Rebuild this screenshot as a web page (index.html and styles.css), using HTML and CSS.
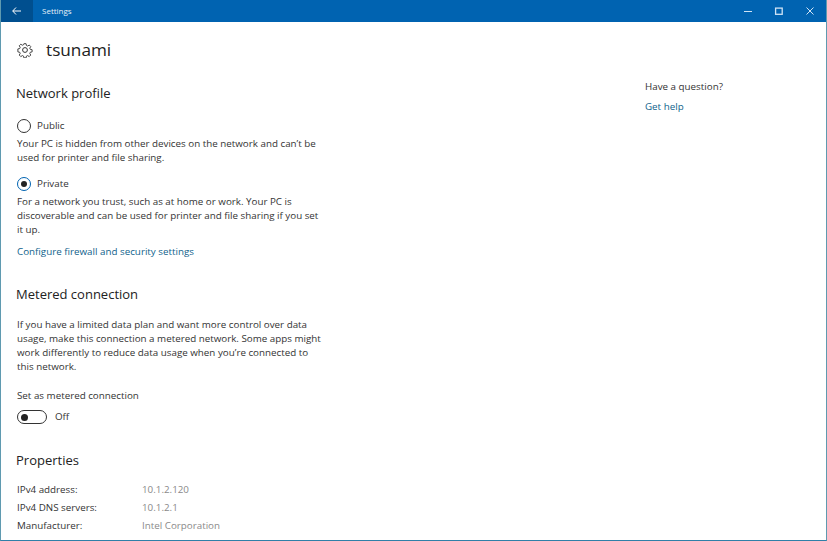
FILE: index.html
```html
<!DOCTYPE html>
<html lang="en">
<head>
<meta charset="utf-8">
<title>Settings</title>
<link rel="stylesheet" href="styles.css">
</head>
<body>
<div class="window">
  <header class="titlebar">
    <button class="back" aria-label="Back">
      <svg width="9" height="8" viewBox="0 0 9 8"><path d="M4 .5 .7 4 4 7.5M.8 4H9" fill="none" stroke="#fff" stroke-width="1"/></svg>
    </button>
    <span class="app-title">Settings</span>
    <div class="controls">
      <svg class="ctl" width="31" height="22" viewBox="0 0 31 22"><path d="M11 11.5h8" stroke="#cfe3f5" fill="none"/></svg>
      <svg class="ctl" width="31" height="22" viewBox="0 0 31 22"><rect x="11.6" y="8.1" width="6.6" height="6.2" stroke="#cfe3f5" stroke-width="1.3" fill="none"/></svg>
      <svg class="ctl" width="31" height="22" viewBox="0 0 31 22"><path d="M11.5 7.5l7 7M18.5 7.5l-7 7" stroke="#cfe3f5" fill="none"/></svg>
    </div>
  </header>
  <div class="viewport">
    <main class="content">
      <div class="page-head">
        <svg class="gear" width="16" height="16" viewBox="0 0 16 16"><g fill="none" stroke="#333"><circle cx="8" cy="8" r="2.4"/><path d="M6.8 1h2.4l.4 2 1.3.6 1.8-1.1 1.7 1.7-1.1 1.8.6 1.3 2 .4v2.4l-2 .4-.6 1.3 1.1 1.8-1.7 1.7-1.8-1.1-1.3.6-.4 2H6.8l-.4-2-1.3-.6-1.8 1.1-1.7-1.7 1.1-1.8-.6-1.3-2-.4V6.8l2-.4.6-1.3-1.1-1.8 1.7-1.7 1.8 1.1 1.3-.6z" transform="translate(.8 .8) scale(.9)"/></g></svg>
        <h1>tsunami</h1>
      </div>
      <section class="profile">
        <h2>Network profile</h2>
        <div class="radio"><span class="dot"></span><span>Public</span></div>
        <p class="desc">Your PC is hidden from other devices on the network and can’t be used for printer and file sharing.</p>
        <div class="radio second"><span class="dot on"></span><span>Private</span></div>
        <p class="desc">For a network you trust, such as at home or work. Your PC is discoverable and can be used for printer and file sharing if you set it up.</p>
        <a class="link config">Configure firewall and security settings</a>
      </section>
      <section class="metered">
        <h2>Metered connection</h2>
        <p class="desc gap">If you have a limited data plan and want more control over data usage, make this connection a metered network. Some apps might work differently to reduce data usage when you’re connected to this network.</p>
        <div class="label">Set as metered connection</div>
        <div class="toggle-row"><span class="toggle"><span class="knob"></span></span><span>Off</span></div>
      </section>
      <section class="props">
        <h2>Properties</h2>
        <dl>
          <dt>IPv4 address:</dt><dd>10.1.2.120</dd>
          <dt>IPv4 DNS servers:</dt><dd>10.1.2.1</dd>
          <dt>Manufacturer:</dt><dd>Intel Corporation</dd>
          <dt>Description:</dt><dd>Intel(R) 82574L Gigabit Network</dd>
        </dl>
      </section>
    </main>
    <aside class="help">
      <div>Have a question?</div>
      <a class="link">Get help</a>
    </aside>
  </div>
</div>
</body>
</html>
```
FILE: styles.css
```css
* { box-sizing: border-box; }
html, body { margin: 0; height: 100%; overflow: hidden; }
body { font-family: "Open Sans", "Noto Sans", sans-serif; font-size: 9.8px; line-height: 18px; color: #333; background: #fff; }
.window { width: 827px; height: 541px; display: flex; flex-direction: column; border: solid #5f9ab0; border-width: 0 1px 1px 1px; border-bottom-color: #2f7fa8; overflow: hidden; }
.titlebar { height: 22px; flex: none; background: #0063b1; color: #e6f0f8; display: flex; align-items: center; margin: 0 -1px; }
.back { width: 33px; height: 22px; background: #004f8f; border: 0; padding: 0; display: flex; align-items: center; justify-content: center; }
.app-title { margin-left: 9px; font-size: 8px; }
.controls { margin-left: auto; margin-right: 1px; display: flex; }
.ctl { display: block; }
.viewport { flex: 1; display: flex; min-height: 0; overflow: hidden; }
.content { width: 644px; padding-left: 15px; flex: none; }
.page-head { display: flex; align-items: center; height: 56px; }
.gear { margin-left: 1px; }
h1 { margin: 0 0 0 13px; font-size: 17.2px; font-weight: 400; color: #222; }
h2 { margin: 0; font-size: 13px; font-weight: 400; color: #222; line-height: 18px; }
.profile { padding-top: 6px; }
.radio { display: flex; align-items: center; gap: 6px; margin: 15px 0 0 1px; }
.radio.second { margin-top: 10px; }
.dot { width: 14px; height: 14px; border: 1.5px solid #333; border-radius: 50%; display: flex; align-items: center; justify-content: center; }
.dot.on { border-color: #0063b1; }
.dot.on::after { content: ""; width: 6px; height: 6px; border-radius: 50%; background: #222; }
.desc { margin: 2px 0 0 1px; width: 306px; line-height: 14px; }
.desc.gap { margin-top: 15px; }
.link { color: #0f5f8c; display: block; }
.config { margin: 6px 0 0 1px; }
.metered { margin-top: 24px; }
.label { margin: 13px 0 0 1px; }
.toggle-row { display: flex; align-items: center; gap: 8px; margin: 3px 0 0 1px; }
.toggle { width: 30px; height: 14px; border: 1.5px solid #333; border-radius: 7px; display: flex; align-items: center; padding-left: 3px; }
.knob { width: 7px; height: 7px; border-radius: 50%; background: #222; }
.props { margin-top: 25px; }
dl { margin: 12px 0 0 1px; display: grid; grid-template-columns: 125px 1fr; }
dt, dd { margin: 0; }
dd { color: #8a8a8a; }
.help { padding: 56px 0 0 0; }
.help .link { margin-top: 2px; }
```
